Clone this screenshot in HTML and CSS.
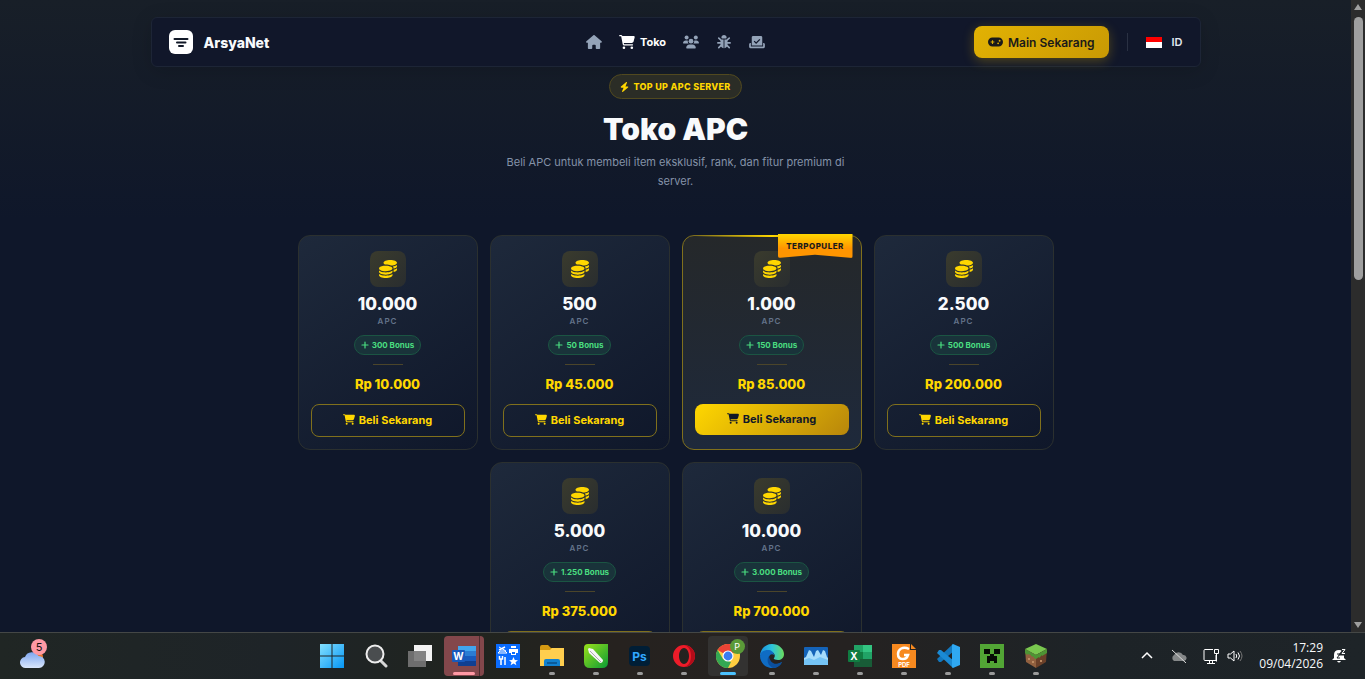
FILE: index.html
```html
<!DOCTYPE html>
<html lang="id">
<head>
    <meta charset="UTF-8">
    <meta name="viewport" content="width=device-width, initial-scale=1.0">
    <title>Toko APC - ArsyaNet</title>
    <link rel="stylesheet" href="styles.css">
</head>
<body>
    <svg class="sprite" aria-hidden="true">
        <symbol id="i-home" viewBox="0 0 576 512"><path d="M575.8 255.5c0 18-15 32.1-32 32.1l-32 0 .7 160.2c0 2.7-.2 5.4-.5 8.1l0 16.2c0 22.1-17.9 40-40 40l-16 0c-1.1 0-2.2 0-3.3-.1c-1.4 .1-2.8 .1-4.2 .1L416 512l-24 0c-22.1 0-40-17.9-40-40l0-24 0-64c0-17.7-14.3-32-32-32l-64 0c-17.7 0-32 14.3-32 32l0 64 0 24c0 22.1-17.9 40-40 40l-24 0-31.9 0c-1.5 0-3-.1-4.5-.2c-1.2 .1-2.4 .2-3.6 .2l-16 0c-22.1 0-40-17.9-40-40l0-112c0-.9 0-1.9 .1-2.8l0-69.7-32 0c-18 0-32-14-32-32.1c0-9 3-17 10-24L266.4 8c7-7 15-8 22-8s15 2 21 7L564.8 231.5c8 7 12 15 11 24z"/></symbol>
        <symbol id="i-cart" viewBox="0 0 576 512"><path d="M0 24C0 10.7 10.7 0 24 0L69.5 0c22 0 41.5 12.8 50.6 32l411 0c26.3 0 45.5 25 38.6 50.4l-41 152.3c-8.5 31.4-37 53.3-69.5 53.3l-288.5 0 5.4 28.5c2.2 11.3 12.1 19.5 23.6 19.5L488 336c13.3 0 24 10.7 24 24s-10.7 24-24 24l-288.3 0c-34.6 0-64.3-24.6-70.7-58.5L77.4 54.5c-.7-3.8-4-6.5-7.9-6.5L24 48C10.7 48 0 37.3 0 24zM128 464a48 48 0 1 1 96 0 48 48 0 1 1 -96 0zm336-48a48 48 0 1 1 0 96 48 48 0 1 1 0-96z"/></symbol>
        <symbol id="i-users" viewBox="0 0 640 512"><circle cx="144" cy="80" r="80"/><circle cx="512" cy="80" r="80"/><circle cx="320" cy="224" r="96"/><path d="M0 299c0-59 48-107 107-107h43c16 0 31 4 45 10-10 50 5 92 40 118H21c-12 0-21-9-21-21zM405 320c35-26 50-68 40-118 14-6 29-10 45-10h43c59 0 107 48 107 107 0 12-9 21-21 21zM128 485c0-74 60-133 133-133h118c73 0 133 59 133 133 0 15-12 27-27 27H155c-15 0-27-12-27-27z"/></symbol>
        <symbol id="i-bug" viewBox="0 0 512 512"><path d="M256 0c-53 0-96 43-96 96v4c0 15 13 28 28 28h136c15 0 28-13 28-28v-4c0-53-43-96-96-96z"/><path d="M240 160h-50c-34 0-62 28-62 62v130c0 65 46 118 112 128zM272 160h50c34 0 62 28 62 62v130c0 65-46 118-112 128z"/><path d="M64 112l82 74M448 112l-82 74M32 288h110M480 288H370M64 462l84-82M448 462l-84-82" fill="none" stroke="currentColor" stroke-width="60" stroke-linecap="round"/></symbol>
        <symbol id="i-vote" viewBox="0 0 576 512"><path fill-rule="evenodd" d="M96 80c0-26 22-48 48-48h288c26 0 48 22 48 48v304H96zM409 176l-34-34-119 121-55-55-34 34 89 88z"/><path d="M0 336c0-26 22-48 48-48h16v128h448V288h16c26 0 48 22 48 48v96c0 26-22 48-48 48H48c-26 0-48-22-48-48z"/></symbol>
        <symbol id="i-bolt" viewBox="0 0 448 512"><path d="M349.4 44.6c5.9-13.7 1.5-29.7-10.6-38.5s-28.6-8-39.9 1.8l-256 224c-10 8.8-13.6 22.9-8.9 35.3S50.7 288 64 288l111.5 0L98.6 467.4c-5.9 13.7-1.5 29.7 10.6 38.5s28.6 8 39.9-1.8l256-224c10-8.8 13.6-22.9 8.9-35.3s-16.6-20.7-30-20.7l-111.5 0L349.4 44.6z"/></symbol>
        <symbol id="i-gamepad" viewBox="0 0 640 512"><path fill-rule="evenodd" d="M192 64C86 64 0 150 0 256s86 192 192 192h256c106 0 192-86 192-192S554 64 448 64zM168 176h48v56h56v48h-56v56h-48v-56h-56v-48h56zM432 272a40 40 0 1 1 0 80 40 40 0 1 1 0-80zM496 160a40 40 0 1 1 0 80 40 40 0 1 1 0-80z"/></symbol>
        <symbol id="i-coins" viewBox="0 0 512 512"><path d="M512 80c0 18-14.3 34.6-38.4 48c-29.1 16.1-72.5 27.5-122.3 30.9c-3.7-1.8-7.4-3.5-11.3-5C300.6 137.4 248.2 128 192 128c-8.3 0-16.4 .2-24.5 .6l-1.1-.6C142.3 114.6 128 98 128 80c0-44.2 86-80 192-80S512 35.8 512 80z"/><path d="M160.7 161.1c10.2-.7 20.7-1.1 31.3-1.1c62.2 0 117.4 12.3 152.5 31.4C369.3 204.9 384 221.7 384 240c0 4-.7 7.9-2.1 11.7c-4.6 13.2-17 25.3-35 35.5l-1.3 .7c-35 19.4-90.8 32-153.6 32c-59.6 0-112.9-11.3-148.2-29.1c-1.9-.9-3.7-1.9-5.5-2.9C14.3 274.6 0 258 0 240c0-34.8 53.4-64.5 128-75.4c10.5-1.5 21.4-2.7 32.7-3.5z"/><path d="M416 240c0-21.9-10.6-39.9-24.1-53.4c28.3-4.4 54.2-11.4 76.2-20.5c16.3-6.8 31.5-15.2 43.9-25.5l0 35.4c0 19.3-16.5 37.1-43.8 50.9c-14.6 7.4-32.4 13.7-52.4 18.5c.1-1.8 .2-3.5 .2-5.3zm-32 96c0 18-14.3 34.6-38.4 48c-1.8 1-3.6 1.9-5.5 2.9C304.9 404.7 251.6 416 192 416c-62.8 0-118.6-12.6-153.6-32C14.3 370.6 0 354 0 336l0-35.4c12.5 10.3 27.6 18.7 43.9 25.5C83.4 342.6 135.8 352 192 352s108.6-9.4 148.1-25.9c7.8-3.2 15.3-6.9 22.4-10.9c6.1-3.4 11.8-7.2 17.2-11.2c1.5-1.1 2.9-2.3 4.3-3.4z"/><path d="M416 336l0-57.9c19-4.2 36.5-9.5 52.1-16c16.3-6.8 31.5-15.2 43.9-25.5l0 35.4c0 10.5-5 21-14.9 30.9c-16.3 16.3-45 29.7-81.3 38.4zM192 448c56.2 0 108.6-9.4 148.1-25.9c16.3-6.8 31.5-15.2 43.9-25.5l0 35.4c0 44.2-86 80-192 80S0 476.2 0 432l0-35.4c12.5 10.3 27.6 18.7 43.9 25.5C83.4 438.6 135.8 448 192 448z"/></symbol>
        <symbol id="i-plus" viewBox="0 0 8 8"><path d="M4 1v6M1 4h6" fill="none" stroke="currentColor" stroke-width="1.2" stroke-linecap="round"/></symbol>
    </svg>

    <div class="window">
        <div class="page">
            <header class="navbar">
                <a href="#" class="brand">
                    <svg class="logo" viewBox="0 0 24 24"><rect width="24" height="24" rx="6" fill="#fff"/><path d="M5.500 9h13M8 12.500h8.500M10 16h4" stroke="#111827" stroke-width="2" stroke-linecap="round"/></svg>
                    <span>ArsyaNet</span>
                </a>
                <nav class="nav-links">
                    <a href="#" aria-label="Beranda"><svg><use href="#i-home"/></svg></a>
                    <a href="#" class="active"><svg><use href="#i-cart"/></svg>Toko</a>
                    <a href="#" aria-label="Komunitas"><svg><use href="#i-users"/></svg></a>
                    <a href="#" aria-label="Lapor bug"><svg><use href="#i-bug"/></svg></a>
                    <a href="#" aria-label="Vote"><svg><use href="#i-vote"/></svg></a>
                </nav>
                <div class="nav-right">
                    <button class="btn-play"><svg><use href="#i-gamepad"/></svg>Main Sekarang</button>
                    <button class="lang"><span class="flag"></span>ID</button>
                </div>
            </header>

            <section class="hero">
                <span class="badge"><svg><use href="#i-bolt"/></svg>TOP UP APC SERVER</span>
                <h1>Toko APC</h1>
                <p>Beli APC untuk membeli item eksklusif, rank, dan fitur premium di server.</p>
            </section>

            <main class="cards">
                <article class="card">
                    <div class="coin"><svg><use href="#i-coins"/></svg></div>
                    <h2>10.000</h2>
                    <span class="unit">APC</span>
                    <span class="bonus"><svg><use href="#i-plus"/></svg>300 Bonus</span>
                    <hr>
                    <div class="price">Rp 10.000</div>
                    <button class="buy"><svg><use href="#i-cart"/></svg>Beli Sekarang</button>
                </article>
                <article class="card">
                    <div class="coin"><svg><use href="#i-coins"/></svg></div>
                    <h2>500</h2>
                    <span class="unit">APC</span>
                    <span class="bonus"><svg><use href="#i-plus"/></svg>50 Bonus</span>
                    <hr>
                    <div class="price">Rp 45.000</div>
                    <button class="buy"><svg><use href="#i-cart"/></svg>Beli Sekarang</button>
                </article>
                <article class="card popular">
                    <span class="ribbon">TERPOPULER</span>
                    <div class="coin"><svg><use href="#i-coins"/></svg></div>
                    <h2>1.000</h2>
                    <span class="unit">APC</span>
                    <span class="bonus"><svg><use href="#i-plus"/></svg>150 Bonus</span>
                    <hr>
                    <div class="price">Rp 85.000</div>
                    <button class="buy"><svg><use href="#i-cart"/></svg>Beli Sekarang</button>
                </article>
                <article class="card">
                    <div class="coin"><svg><use href="#i-coins"/></svg></div>
                    <h2>2.500</h2>
                    <span class="unit">APC</span>
                    <span class="bonus"><svg><use href="#i-plus"/></svg>500 Bonus</span>
                    <hr>
                    <div class="price">Rp 200.000</div>
                    <button class="buy"><svg><use href="#i-cart"/></svg>Beli Sekarang</button>
                </article>
                <article class="card">
                    <div class="coin"><svg><use href="#i-coins"/></svg></div>
                    <h2>5.000</h2>
                    <span class="unit">APC</span>
                    <span class="bonus"><svg><use href="#i-plus"/></svg>1.250 Bonus</span>
                    <hr>
                    <div class="price">Rp 375.000</div>
                    <button class="buy"><svg><use href="#i-cart"/></svg>Beli Sekarang</button>
                </article>
                <article class="card">
                    <div class="coin"><svg><use href="#i-coins"/></svg></div>
                    <h2>10.000</h2>
                    <span class="unit">APC</span>
                    <span class="bonus"><svg><use href="#i-plus"/></svg>3.000 Bonus</span>
                    <hr>
                    <div class="price">Rp 700.000</div>
                    <button class="buy"><svg><use href="#i-cart"/></svg>Beli Sekarang</button>
                </article>
            </main>
        </div>
        <div class="scrollbar">
            <svg viewBox="0 0 10 8"><path d="M5 1L9 7H1z"/></svg>
            <div class="track"><div class="thumb"></div></div>
            <svg viewBox="0 0 10 8"><path d="M5 7L9 1H1z"/></svg>
        </div>
    </div>

    <footer class="taskbar">
        <button class="widget" aria-label="Cuaca">
            <svg viewBox="0 0 26 20"><defs><linearGradient id="cl" x2="0" y2="1"><stop offset="0" stop-color="#7ea6ef"/><stop offset="1" stop-color="#d9e6fb"/></linearGradient></defs><circle cx="19" cy="8" r="4" fill="#e8762c"/><path d="M6 19a5.500 5.500 0 0 1-1-11A7.500 7.500 0 0 1 18.500 7 6 6 0 0 1 19 19z" fill="url(#cl)"/></svg>
            <span>5</span>
        </button>

        <div class="apps">
            <button aria-label="Start"><svg viewBox="0 0 24 24"><defs><linearGradient id="win" x2="1" y2="1"><stop offset="0" stop-color="#84e0ff"/><stop offset="1" stop-color="#0596f5"/></linearGradient></defs><path fill="url(#win)" d="M0 0h11.500v11.500H0zM12.500 0H24v11.500H12.500zM0 12.500h11.500V24H0zM12.500 12.500H24V24H12.500z"/></svg></button>
            <button aria-label="Cari"><svg viewBox="0 0 24 24"><path d="M16.500 16.500L22 22" stroke="#d6d6d6" stroke-width="3" stroke-linecap="round"/><circle cx="11" cy="10" r="8.500" fill="#4a4d4f" stroke="#eee" stroke-width="2"/></svg></button>
            <button aria-label="Tampilan tugas"><svg viewBox="0 0 24 24"><path d="M6 1h18v16H6z" fill="#f3f3f3"/><path d="M0 7h18v16H0z" fill="#777" opacity=".9"/></svg></button>
            <button class="alert" aria-label="Word"><svg viewBox="0 0 24 24"><path d="M6 2h18v5.500H6z" fill="#41a5ee"/><path d="M6 7h18v5H6z" fill="#2b7cd3"/><path d="M6 12h18v5H6z" fill="#185abd"/><path d="M6 17h18v5H6z" fill="#103f91"/><rect y="6" width="13" height="12" rx="1" fill="#185abd"/><text x="6.500" y="15.500" class="ic-w">W</text></svg></button>
            <button aria-label="Alat"><svg viewBox="0 0 24 24"><path d="M0 0h24v24H0z" fill="#0a6cff"/><path d="M2 9h9l-2-2H4zM3 3l7 4" fill="none" stroke="#fff"/><path d="M3 6l6-3" stroke="#fff" stroke-width="1.500"/><path d="M13 5h9v4h-9zM15 2h5v2h-5zM15 7h5v4h-5z" fill="#fff"/><path d="M16 8h3v2h-3z" fill="#0a6cff"/><path d="M5 15v6M9 13v8M3.500 12v3h3v-3" fill="none" stroke="#fff" stroke-width="1.500"/><path d="M17.500 13l1.300 3 3.200.2-2.500 2 .9 3.100-2.900-1.700-2.900 1.700.9-3.100-2.500-2 3.200-.2z" fill="#fff"/></svg></button>
            <button class="open" aria-label="File Explorer"><svg viewBox="0 0 24 24"><path d="M0 3q0-2 2-2h6l3 3h13v6H0z" fill="#d69a12"/><path d="M0 6h10l2-2h12v18H0z" fill="#ffce4e"/><path d="M4 22v-5q0-2 2-2h12q2 0 2 2v5z" fill="#1181cf"/><path d="M7 19h10" stroke="#0a5b9a" stroke-width="2"/></svg></button>
            <button class="open" aria-label="CorelDRAW"><svg viewBox="0 0 24 24"><defs><linearGradient id="cd" x2="1" y2="1"><stop offset="0" stop-color="#9be11a"/><stop offset="1" stop-color="#0a9c35"/></linearGradient></defs><path d="M4 0h20v18q0 6-6 6H6q-6 0-6-6V4q0-4 4-4z" fill="url(#cd)"/><path d="M4 5l1-1 4 1 10 11q0 3-3 3L5 9z" fill="#f5f5f5"/><path d="M6 7l11 11" stroke="#aaa"/></svg></button>
            <button class="open" aria-label="Photoshop"><svg viewBox="0 0 24 24"><rect x="1" y="2" width="21" height="20" rx="4" fill="#001e36"/><text x="11.500" y="16.500" class="ic-ps">Ps</text></svg></button>
            <button class="open" aria-label="Opera"><svg viewBox="0 0 24 24"><path fill="#ed1c29" fill-rule="evenodd" d="M12 1a11 11 0 1 0 0 22 11 11 0 1 0 0-22zM12 4c3 0 5 4 5 8s-2 8-5 8-5-4-5-8 2-8 5-8z"/><path d="M12 1c6 0 11 5 11 11s-5 11-11 11c5-1 7-6 7-11s-2-10-7-11z" fill="#b30c19"/></svg></button>
            <button class="current" aria-label="Chrome"><svg viewBox="0 0 24 24"><circle cx="12" cy="12" r="12" fill="#ffcd40"/><path d="M12 12L1.600 6A12 12 0 0 1 22.400 6z" fill="#ea4335"/><path d="M12 24A12 12 0 0 1 1.600 6L7 15l5 2 3 1z" fill="#34a853"/><path d="M12 6h10.400" stroke="#ea4335" stroke-width="2"/><circle cx="12" cy="12" r="5.500" fill="#fff"/><circle cx="12" cy="12" r="4.400" fill="#3a7df0"/></svg><span class="profile">P</span></button>
            <button class="open" aria-label="Edge"><svg viewBox="0 0 24 24"><defs><linearGradient id="ed" x2="1"><stop offset="0" stop-color="#1b8fe0"/><stop offset=".5" stop-color="#2cc3dc"/><stop offset="1" stop-color="#6bdc5c"/></linearGradient></defs><path d="M0 11C1 4 6 0 12 0c7 0 12 5 12 10 0 4-3 6-6 6-3 0-5-1-4-2 2-3 0-6-4-6-5 0-8 3-10 3z" fill="url(#ed)"/><path d="M0 12c0-4 4-6 8-6 3 0 6 2 6 5-3-2-6 1-5 5s6 6 13 2c-2 4-6 6-10 6C5 24 0 18 0 12z" fill="#0f6cc4"/><path d="M9 12c-3 4-1 10 4 12 4 0 7-2 9-6-7 4-12 1-13-6z" fill="#0b4f9e"/></svg></button>
            <button class="open" aria-label="Monitor"><svg viewBox="0 0 24 24"><rect y="3" width="24" height="18" rx="1" fill="#1463b8"/><path d="M0 14l2-1 3-7 2 1 3 6 2-6 2-1 3 5 2-5 2 1 2 6 1 1v7H0z" fill="#a6dcfb"/><path d="M0 16l5-2 5 2 6-3 8 3v4q0 1-1 1H1q-1 0-1-1z" fill="#74c3f5"/></svg></button>
            <button class="open" aria-label="Excel"><svg viewBox="0 0 24 24"><path d="M6 1h18v22H6z" fill="#21a366"/><path d="M15 1h9v7h-9z" fill="#33c481"/><path d="M6 8h9v7H6z" fill="#107c41"/><path d="M6 15h18v8H6z" fill="#185c37"/><rect y="6" width="12" height="12" rx="1" fill="#107c41"/><text x="6" y="16" class="ic-w">X</text></svg></button>
            <button class="open" aria-label="Foxit PDF"><svg viewBox="0 0 24 24"><path d="M0 0h18v6h6v18H0z" fill="#f7891f"/><path d="M19 0l5 5h-5z" fill="#f7891f"/><path d="M17 5c-6-3-11 0-11 5 0 6 8 7 10 1h-4" fill="none" stroke="#fff" stroke-width="2.500"/><text x="12" y="22.500" class="ic-pdf">PDF</text></svg></button>
            <button class="open" aria-label="VS Code"><svg viewBox="0 0 24 24"><path d="M17 0L1 15l2 3 2 0L18 7z" fill="#1277bd"/><path d="M17 24L1 9l2-3h2l13 11z" fill="#1a8ad4"/><path d="M17 0l7 3v18l-7 3-1-1V1z" fill="#2fa8f2"/></svg></button>
            <button class="open" aria-label="Minecraft Launcher"><svg viewBox="0 0 24 24"><path d="M0 0h24v24H0z" fill="#52a535"/><path d="M4 5h6v5H4zM14 5h6v5h-6zM10 10h4v2h3v7h-3v-2h-4v2H7v-7h3z" fill="#060a05"/></svg></button>
            <button class="open" aria-label="Minecraft"><svg viewBox="0 0 24 24"><path d="M12 0l11 5-11 6L1 5z" fill="#79c84f"/><path d="M1 5l11 6v13L2 18z" fill="#91603f"/><path d="M23 5l-11 6v13l10-6z" fill="#6b4029"/><path d="M1 5l11 6v4l-2-1v-1l-3-1v-1l-3-1-1 1-2-2zM23 5l-11 6v4l3-2v1l3-3v1l5-3z" fill="#4d9434"/><path d="M4 14h2v2H4zM8 17h2v2H8zM16 16h2v2h-2z" fill="#bb8a62"/></svg></button>
        </div>

        <div class="tray">
            <button aria-label="Ikon tersembunyi"><svg viewBox="0 0 16 16"><path d="M3 10l5-5 5 5" fill="none" stroke="#fff" stroke-width="1.500"/></svg></button>
            <button class="cloud" aria-label="OneDrive"><svg viewBox="0 0 16 16"><path d="M3 13a3.500 3.500 0 0 1 0-6 5 5 0 0 1 9 0 3 3 0 0 1 1 6z" fill="#858889"/><path d="M1 2l14 13" stroke="#ddd"/></svg></button>
            <button class="net" aria-label="Jaringan"><svg viewBox="0 0 16 16"><path d="M10 1.500H2q-1 0-1 1v9q0 1 1 1h11V7M4 15.500h8M6.500 13v2M9.500 13v2M11.500 1.500h4v4h-4zM13.500 5.500v8" fill="none" stroke="#fff"/></svg></button>
            <button aria-label="Volume"><svg viewBox="0 0 16 16"><path d="M1 6h2.500L7 3v10l-3.500-3H1zM9 6q1.500 2 0 4M11 4.500q3 3.500 0 7" fill="none" stroke="#fff"/><path d="M13 3q4 5 0 10" fill="none" stroke="#777"/></svg></button>
            <div class="clock"><time>17:29</time><time>09/04/2026</time></div>
            <button aria-label="Notifikasi"><svg viewBox="0 0 16 16"><path d="M1 12l2-2V7q0-5 5-5t5 5v3l2 2zM6 13h4q-2 3-4 0z" fill="#fff"/><path d="M6 6h3l-3 4h3" fill="none" stroke="#20262a"/><path d="M10 1h4l-4 5h4" fill="none" stroke="#20262a" stroke-width="3"/><path d="M11 1.500h3l-3 4h3" fill="none" stroke="#fff"/></svg></button>
        </div>
    </footer>
</body>
</html>
```
FILE: styles.css
```css
* {box-sizing: border-box;}

body {
    margin: 0;
    height: 100vh;
    display: flex;
    flex-direction: column;
    overflow: hidden;
    background: #0f172a;
    color: #f8fafc;
    font-family: Inter, "Liberation Sans", sans-serif;
}

button {
    border: 0;
    padding: 0;
    background: none;
    color: inherit;
    font-family: inherit;
    cursor: pointer;
}

a {
    color: inherit;
    text-decoration: none;
}

svg {
    display: block;
    fill: currentColor;
}

.sprite {
    position: absolute;
    width: 0;
    height: 0;
}

.window {
    flex: 1;
    min-height: 0;
    display: flex;
}

.page {
    flex: 1;
    overflow-y: auto;
    scrollbar-width: none;
    padding: 17px 0 40px;
    background: linear-gradient(180deg, #181f28 0, #0f172a 220px);
}

/* navbar */
.navbar {
    max-width: 1050px;
    height: 50px;
    margin: 0 auto;
    padding: 0 17px;
    display: grid;
    grid-template-columns: 1fr auto 1fr;
    align-items: center;
    background: #11172a;
    border: 1px solid #1d2536;
    border-radius: 6px;
    box-shadow: 0 4px 20px rgba(0, 0, 0, 0.15);
}

.brand {
    display: flex;
    align-items: center;
    gap: 11px;
    font-size: 14px;
    font-weight: 800;
}

.logo {
    width: 24px;
    height: 24px;
}

.nav-links {
    display: flex;
    gap: 17px;
    color: #94a3b8;
    font-size: 11px;
    font-weight: 700;
}

.nav-links a {
    display: flex;
    align-items: center;
    gap: 5px;
}

.nav-links svg {
    width: 16px;
    height: 14px;
}

.nav-links .active {
    color: #fff;
}

.nav-right {
    display: flex;
    justify-content: flex-end;
    align-items: center;
    gap: 18px;
}

.btn-play {
    height: 32px;
    padding: 0 14px;
    display: flex;
    align-items: center;
    gap: 5px;
    border-radius: 8px;
    background: linear-gradient(135deg, #e2b203, #c99a04);
    box-shadow: 0 3px 12px rgba(226, 178, 3, 0.3);
    color: #1a1a1a;
    font-size: 12px;
    font-weight: 600;
}

.btn-play svg {
    width: 15px;
    height: 12px;
}

.lang {
    height: 18px;
    padding-left: 18px;
    display: flex;
    align-items: center;
    gap: 10px;
    border-left: 1px solid #2a3143;
    color: #e2e8f0;
    font-size: 11px;
    font-weight: 600;
}

.flag {
    width: 16px;
    height: 11px;
    background: linear-gradient(#f00 50%, #fff 50%);
}

/* hero */
.hero {
    padding-top: 7px;
    display: flex;
    flex-direction: column;
    align-items: center;
    text-align: center;
}

.badge {
    height: 25px;
    padding: 0 10px;
    display: flex;
    align-items: center;
    gap: 4px;
    border: 1px solid #51491f;
    border-radius: 13px;
    background: #2b2d26;
    color: #ffd700;
    font-size: 9px;
    font-weight: 800;
    letter-spacing: 0.3px;
}

.badge svg {
    width: 9px;
    height: 10px;
}

.hero h1 {
    margin: 11px 0 5px;
    font-size: 30px;
    font-weight: 900;
    line-height: 38px;
}

.hero p {
    max-width: 360px;
    margin: 0 0 44px;
    color: #8492a8;
    font-size: 11px;
    line-height: 19px;
}

/* cards */
.cards {
    max-width: 756px;
    margin: 0 auto;
    display: flex;
    flex-wrap: wrap;
    justify-content: center;
    gap: 12px;
}

.card {
    position: relative;
    width: 180px;
    height: 215px;
    padding: 15px 12px 12px;
    display: flex;
    flex-direction: column;
    align-items: center;
    border: 1px solid #2b302f;
    border-radius: 12px;
    background: linear-gradient(145deg, #1e293b, #0f172a);
}

.coin {
    width: 36px;
    height: 36px;
    display: grid;
    place-items: center;
    border-radius: 8px;
    background: linear-gradient(135deg, #3a3b2d, #292d2f);
    color: #ffd700;
}

.coin svg {
    width: 18px;
    height: 18px;
}

.card h2 {
    margin: 7px 0 0;
    font-size: 17px;
    font-weight: 800;
    line-height: 21px;
}

.unit {
    margin-bottom: 8px;
    color: #64748b;
    font-size: 8px;
    font-weight: 600;
    letter-spacing: 1px;
    line-height: 12px;
}

.bonus {
    height: 20px;
    padding: 0 6px;
    display: flex;
    align-items: center;
    gap: 3px;
    border: 1px solid #1b5543;
    border-radius: 10px;
    background: #19333a;
    color: #4ade80;
    font-size: 8px;
    font-weight: 700;
}

.bonus svg {
    width: 8px;
    height: 8px;
}

.card hr {
    width: 30px;
    height: 1px;
    margin: 9px 0;
    border: 0;
    background: #4b452a;
}

.price {
    color: #ffd700;
    font-size: 13px;
    font-weight: 800;
    line-height: 20px;
}

.buy {
    width: 100%;
    height: 33px;
    margin-top: 10px;
    padding-bottom: 2px;
    display: flex;
    justify-content: center;
    align-items: center;
    gap: 4px;
    border: 1px solid #80701c;
    border-radius: 8px;
    color: #ffd700;
    font-size: 11px;
    font-weight: 700;
}

.buy svg {
    width: 12px;
    height: 11px;
}

.popular {
    border-color: #80701c;
    background: linear-gradient(180deg, #25282a, #1e293b);
}

.popular::before {
    content: "";
    position: absolute;
    top: -1px;
    left: 12px;
    right: 12px;
    height: 2px;
    background: linear-gradient(90deg, transparent, #ffd700, transparent);
}

.popular .buy {
    height: 31px;
    border: 0;
    background: linear-gradient(135deg, #ffd700, #b8860b);
    color: #111827;
}

.ribbon {
    position: absolute;
    top: -2px;
    right: 8px;
    width: 75px;
    height: 24px;
    border-radius: 0 0 2px 2px;
    background: linear-gradient(#ffd700, #ff9500 60%);
    clip-path: polygon(0 0, 100% 0, 100% 100%, 50% 86%, 0 100%);
    color: #1a1a1a;
    font-size: 8px;
    font-weight: 800;
    letter-spacing: 0.5px;
    line-height: 24px;
    text-align: center;
}

/* browser scrollbar */
.scrollbar {
    width: 14px;
    padding: 3px 2px;
    display: flex;
    flex-direction: column;
    align-items: center;
    gap: 6px;
    background: #2c2c2c;
    color: #9f9f9f;
}

.scrollbar svg {
    width: 10px;
    height: 8px;
}

.track {
    flex: 1;
}

.thumb {
    width: 9px;
    height: 44%;
    border-radius: 5px;
    background: #9f9f9f;
}

/* windows taskbar */
.taskbar {
    height: 47px;
    display: grid;
    grid-template-columns: 1fr auto 1fr;
    align-items: center;
    border-top: 1px solid #444746;
    background: linear-gradient(90deg, #202624, #1e2428 20%, #20241f 34%, #26221f 45%, #252221 62%, #1d2327 80%, #1e2428);
}

.widget {
    position: relative;
    justify-self: start;
    margin-left: 20px;
}

.widget svg {
    width: 26px;
    height: 20px;
    margin-top: 6px;
}

.widget span {
    position: absolute;
    top: -4px;
    left: 11px;
    width: 16px;
    height: 16px;
    border-radius: 8px;
    background: #ff99a4;
    color: #111;
    font-size: 11px;
    line-height: 16px;
}

.apps {
    padding-left: 2px;
    display: flex;
}

.apps button {
    position: relative;
    width: 40px;
    height: 40px;
    margin: 0 2px;
    display: grid;
    place-items: center;
    border-radius: 4px;
}

.apps svg {
    width: 24px;
    height: 24px;
}

.apps .open::after,
.apps .current::after,
.apps .alert::after {
    content: "";
    position: absolute;
    bottom: 1px;
    left: 17px;
    width: 6px;
    height: 3px;
    border-radius: 2px;
    background: #9a9a9a;
}

.apps .current {
    background: #333231;
}

.apps .current::after {
    left: 12px;
    width: 16px;
    background: #4cc2ff;
}

.apps .alert {
    background: linear-gradient(90deg, #83474b 35px, #4e2d2f 35px, #4e2d2f 36px, #83474b 36px);
}

.apps .alert::after {
    left: 9px;
    width: 22px;
    background: #ff99a4;
}

.profile {
    position: absolute;
    top: 3px;
    right: 3px;
    width: 15px;
    height: 15px;
    border-radius: 8px;
    background: #5a9a38;
    color: #fff;
    font-size: 9px;
    line-height: 15px;
}

.ic-w,
.ic-ps,
.ic-pdf {
    fill: #fff;
    font-weight: 700;
    text-anchor: middle;
}

.ic-w {font-size: 10px;}

.ic-ps {
    fill: #31a8ff;
    font-size: 12px;
}

.ic-pdf {font-size: 6px;}

.tray {
    justify-self: end;
    padding-right: 18px;
    display: flex;
    align-items: center;
    gap: 8px;
    font-family: "Open Sans", "Noto Sans", sans-serif;
}

.tray svg {
    width: 16px;
    height: 16px;
}

.tray .cloud {
    margin: 0 8px;
}

.clock {
    margin-left: 8px;
    display: flex;
    flex-direction: column;
    align-items: flex-end;
    font-size: 12px;
    line-height: 16px;
}
```
